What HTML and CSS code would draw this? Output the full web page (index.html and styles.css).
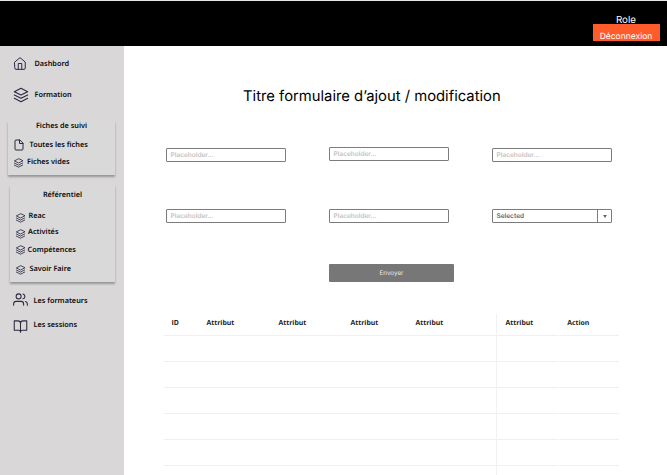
FILE: index.html
```
<!DOCTYPE html>
<html lang="fr">
<head>
<meta charset="utf-8">
<title>Formulaire</title>
<link rel="stylesheet" href="styles.css">
</head>
<body>
<svg class="sprite" aria-hidden="true">
  <symbol id="home" viewBox="0 0 24 24"><path d="M3 9.500 12 2l9 7.500V20a2 2 0 0 1-2 2H5a2 2 0 0 1-2-2zM9 22V12h6v10"/></symbol>
  <symbol id="layers" viewBox="0 0 24 24"><path d="M12 2 2 7l10 5 10-5zM2 12l10 5 10-5M2 17l10 5 10-5"/></symbol>
  <symbol id="file" viewBox="0 0 24 24"><path d="M13 2H6a2 2 0 0 0-2 2v16a2 2 0 0 0 2 2h12a2 2 0 0 0 2-2V9zM13 2v7h7"/></symbol>
  <symbol id="users" viewBox="0 0 24 24"><path d="M17 21v-2a4 4 0 0 0-4-4H5a4 4 0 0 0-4 4v2M23 21v-2a4 4 0 0 0-3-3.870M16 3.130a4 4 0 0 1 0 7.750"/><circle cx="9" cy="7" r="4"/></symbol>
  <symbol id="book" viewBox="0 0 24 24"><path d="M2 3h6a4 4 0 0 1 4 4v14a3 3 0 0 0-3-3H2zM22 3h-6a4 4 0 0 0-4 4v14a3 3 0 0 1 3-3h7z"/></symbol>
</svg>
<header class="topbar">
  <div class="account">
    <span class="role">Role</span>
    <button class="logout">Déconnexion</button>
  </div>
</header>
<div class="layout">
  <nav class="sidebar">
    <a class="item dashboard"><svg class="icon"><use href="#home"/></svg><span>Dashbord</span></a>
    <a class="item formation"><svg class="icon"><use href="#layers"/></svg><span>Formation</span></a>
    <section class="card tracking">
      <h2>Fiches de suivi</h2>
      <a class="item all"><svg class="icon"><use href="#file"/></svg><span>Toutes les fiches</span></a>
      <a class="item blank"><svg class="icon"><use href="#layers"/></svg><span>Fiches vides</span></a>
    </section>
    <section class="card reference">
      <h2>Référentiel</h2>
      <a class="item reac"><svg class="icon"><use href="#layers"/></svg><span>Reac</span></a>
      <a class="item activities"><svg class="icon"><use href="#layers"/></svg><span>Activités</span></a>
      <a class="item skills"><svg class="icon"><use href="#layers"/></svg><span>Compétences</span></a>
      <a class="item knowhow"><svg class="icon"><use href="#layers"/></svg><span>Savoir Faire</span></a>
    </section>
    <a class="item trainers"><svg class="icon"><use href="#users"/></svg><span>Les formateurs</span></a>
    <a class="item sessions"><svg class="icon"><use href="#book"/></svg><span>Les sessions</span></a>
  </nav>
  <main class="content">
    <h1>Titre formulaire d’ajout / modification</h1>
    <form class="form">
      <div class="field">Placeholder...</div>
      <div class="field raised">Placeholder...</div>
      <div class="field">Placeholder...</div>
      <div class="field">Placeholder...</div>
      <div class="field">Placeholder...</div>
      <div class="field select"><span>Selected</span><span class="arrow"></span></div>
      <button type="button" class="submit">Envoyer</button>
    </form>
    <div class="table">
      <div class="row head"><div class="group"><span>ID</span><span>Attribut</span><span>Attribut</span><span>Attribut</span><span>Attribut</span></div><div class="cell">Attribut</div><div class="cell">Action</div></div>
      <div class="row"><div class="group"></div><div class="cell"></div><div class="cell"></div></div>
      <div class="row"><div class="group"></div><div class="cell"></div><div class="cell"></div></div>
      <div class="row"><div class="group"></div><div class="cell"></div><div class="cell"></div></div>
      <div class="row"><div class="group"></div><div class="cell"></div><div class="cell"></div></div>
      <div class="row"><div class="group"></div><div class="cell"></div><div class="cell"></div></div>
      <div class="row"><div class="group"></div><div class="cell"></div><div class="cell"></div></div>
    </div>
  </main>
</div>
</body>
</html>
```
FILE: styles.css
```
* { box-sizing: border-box; }
body { margin: 0; height: 475px; overflow: hidden; background: #fff; color: #000; font-family: Inter, "Liberation Sans", sans-serif; text-rendering: geometricPrecision; }
.sprite { display: none; }
h1, h2 { margin: 0; }
button { margin: 0; padding: 0; border: 0; font-family: inherit; text-rendering: inherit; }

.topbar { height: 45px; background: #000; border-top: 1px solid #e4e9e8; border-bottom: 0; display: flex; justify-content: flex-end; padding: 12px 7.500px 0 0; }
.account { width: 67px; display: flex; flex-direction: column; }
.role { height: 11px; line-height: 15px; font-size: 9.800px; color: #fff; text-align: center; }
.logout { height: 17px; padding-top: 8px; background: #ff5c2b; color: #fff; font-size: 8.500px; line-height: 10px; }

.layout { display: flex; height: 430px; border-top: 1px solid #000; }
.sidebar { flex: none; width: 123.500px; padding-top: 9.600px; background: #d9d7d8; font: 600 7.300px "Noto Sans", sans-serif; color: #0b0b0b; }
.item { display: flex; align-items: center; height: 16px; white-space: nowrap; }
.icon { flex: none; width: 15px; height: 15px; fill: none; stroke: #2c2942; stroke-width: 1.700; stroke-linecap: round; stroke-linejoin: round; }
.dashboard { padding-left: 13px; }
.dashboard .icon { width: 14px; margin-right: 7.500px; }
.formation { margin-top: 15.500px; padding-left: 13px; }
.formation .icon { width: 16px; height: 16px; margin-right: 5.500px; }
.card { background: #d9d9d9; box-shadow: 0 1.500px 2px rgba(0, 0, 0, .3); }
.card h2 { font: inherit; line-height: 10px; text-align: center; }
.card .icon { width: 11px; height: 10px; stroke-width: 2; }
.tracking { width: 107px; height: 54px; margin: 17.900px 0 0 8px; }
.card.tracking h2 { line-height: 11px; height: 10px; }
.all { margin-top: 6px; padding-left: 5px; }
.tracking .all .icon { width: 12px; height: 12px; margin-right: 4.500px; }
.blank { margin-top: 1px; padding-left: 4.500px; }
.blank .icon { margin: 3px 3.500px 0 0; }
.reference { width: 105px; height: 97px; margin: 10px 0 0 10px; padding-top: 5.500px; }
.reference .item { padding-left: 5px; }
.reac { margin-top: 7.500px; }
.reac .icon, .activities .icon { margin: 4px 2.500px 0 0; }
.activities .icon { margin-right: 2px; }
.skills { margin-top: 2px; }
.skills .icon { margin: 1px 1.500px 0 0; }
.knowhow { margin-top: 3px; }
.knowhow .icon { margin: 2px 3.500px 0 0; }
.trainers { margin-top: 11.500px; padding-left: 13px; }
.trainers .icon { margin: -3px 5.500px 0 0; }
.sessions { margin-top: 8px; padding-left: 13px; }
.sessions .icon { margin: 3px 5.500px 0 0; }

.content { flex: 1; min-width: 0; padding: 39px 46px 0 40.500px; }
h1 { margin-left: -1px; height: 22px; width: 418px; padding-left: 80px; font-size: 14.800px; font-weight: 400; line-height: 22px; white-space: nowrap; }
.form { display: grid; grid-template-columns: repeat(3, 120px); column-gap: 43px; row-gap: 47.500px; margin: 40.500px 0 0 2px; }
.field { height: 14px; border: 1px solid #7c7c7c; border-radius: 1px; padding-left: 3.500px; font-size: 6.500px; font-weight: 600; line-height: 13px; color: #c4c4c4; }
.raised { margin-top: -1px; }
.select { display: flex; justify-content: space-between; color: #666; }
.arrow { width: 14px; border-left: 1px solid #7c7c7c; display: flex; align-items: center; justify-content: center; }
.arrow::before { content: ""; border: 2px solid transparent; border-top: 3px solid #666; border-bottom: 0; }
.submit { grid-column: 2; width: 125px; height: 18px; margin-top: -7px; border-radius: 1px; background: #777; color: #e5e5e5; font-size: 6.300px; line-height: 18px; }

.table { margin-top: 32px; font: 700 6.900px "Open Sans", sans-serif; color: #222; }
.row { display: flex; height: 26px; }
.head { height: 22px; line-height: 20px; }
.group { width: 333px; border-bottom: 1px solid #efeff1; border-right: 1px solid #f1f1f5; display: grid; grid-template-columns: 35px 72px 72px 65px 1fr; padding-left: 7.500px; }
.cell { width: 60.700px; margin-right: 1px; padding-left: 8.500px; border-bottom: 1px solid #efeff1; }
```
